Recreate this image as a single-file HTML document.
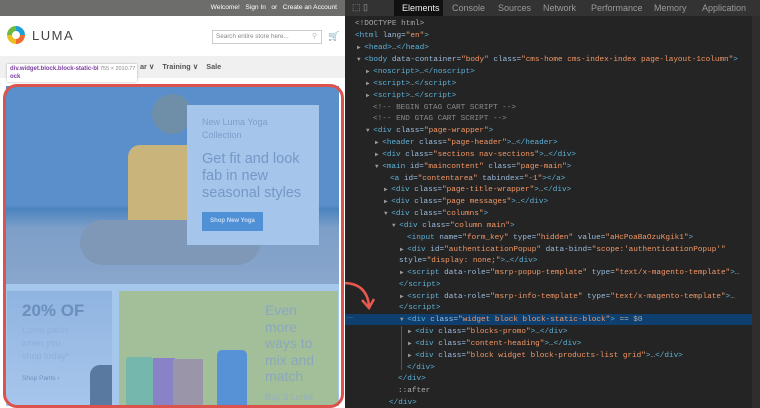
<!DOCTYPE html>
<html><head><style>
*{margin:0;padding:0;box-sizing:border-box}
body{width:760px;height:408px;overflow:hidden;position:relative;background:#fff;font-family:"Liberation Sans",sans-serif}
.a{position:absolute}
#dev{left:345px;top:0;width:415px;height:408px;background:#242424}
.ln{position:absolute;font-family:"Liberation Mono",monospace;font-size:7.7px;white-space:pre;color:#9bbbdc;line-height:10px}
.t{color:#5db0d7}.v{color:#f29766}.c{color:#8a8a8a}.g{color:#aaa}
.tri{color:#999;font-size:6px}
.tab{position:absolute;top:3px;font-size:9px;color:#9a9a9a}
</style></head><body>
<div class="a" style="left:0;top:0;width:345px;height:16px;background:#6d6d6b"></div>
<div class="a" style="right:423px;top:4px;font-size:6.6px;color:#fff;white-space:pre">Welcome!   Sign In   or   Create an Account</div>
<svg class="a" style="left:6px;top:25px" width="20" height="20" viewBox="0 0 20 20">
<path d="M10 1 A9 9 0 0 1 19 10 L14 10 A4 4 0 0 0 10 6Z" fill="#1e9fd8"/>
<path d="M19 10 A9 9 0 0 1 10 19 L10 14 A4 4 0 0 0 14 10Z" fill="#ef6c2d"/>
<path d="M10 19 A9 9 0 0 1 1 10 L6 10 A4 4 0 0 0 10 14Z" fill="#e8c020"/>
<path d="M1 10 A9 9 0 0 1 10 1 L10 6 A4 4 0 0 0 6 10Z" fill="#6dbb3c"/></svg>
<div class="a" style="left:32px;top:28px;font-size:13px;letter-spacing:1.5px;color:#444">LUMA</div>
<div class="a" style="left:212px;top:30px;width:110px;height:14px;border:1px solid #ccc"></div>
<div class="a" style="left:216px;top:33px;font-size:6.3px;color:#888">Search entire store here...</div>
<div class="a" style="left:312px;top:32px;font-size:7px;color:#bbb">⚲</div>
<div class="a" style="left:328px;top:31px;font-size:9px;color:#666">🛒</div>
<div class="a" style="left:0;top:56px;width:345px;height:22px;background:#f0f0f0"></div>
<div class="a" style="left:140px;top:62px;font-size:7.3px;color:#555;font-weight:bold;white-space:pre">ar ∨    Training ∨    Sale</div>
<div class="a" style="left:7px;top:64px;width:130px;height:18px;background:#fff;box-shadow:0 0 2px #aaa"></div>
<div class="a" style="left:10px;top:66px;font-size:6px;color:#7a3e9d;font-weight:bold">div.widget.block.block-static-bl</div>
<div class="a" style="left:100px;top:66px;font-size:5.5px;color:#888">755 × 2010.77</div>
<div class="a" style="left:10px;top:74px;font-size:6px;color:#7a3e9d;font-weight:bold">ock</div>
<div class="a" style="left:6px;top:86px;width:333px;height:198px;background:linear-gradient(#5a8fcc 0%,#5b8fcb 60%,#4b83bf 62%,#7d9fc8 72%,#8aa6cc 100%)"></div>
<div class="a" style="left:152px;top:94px;width:40px;height:40px;border-radius:50%;background:#6f8fa8"></div>
<div class="a" style="left:128px;top:145px;width:70px;height:85px;background:#c9b57c;border-radius:12px 12px 4px 4px"></div>
<div class="a" style="left:80px;top:220px;width:180px;height:45px;background:#7f98b8;border-radius:40px"></div>
<div class="a" style="left:187px;top:105px;width:132px;height:140px;background:#a5c5eb"></div>
<div class="a" style="left:202px;top:116px;font-size:9px;line-height:13px;color:#7d9fca">New Luma Yoga<br>Collection</div>
<div class="a" style="left:202px;top:151px;font-size:14.5px;line-height:17px;color:#7598c6">Get fit and look<br>fab in new<br>seasonal styles</div>
<div class="a" style="left:202px;top:212px;width:61px;height:19px;background:#4f90d6;color:#c7dcf2;font-size:6px;font-weight:bold;text-align:center;line-height:19px">Shop New Yoga</div>
<div class="a" style="left:6px;top:284px;width:333px;height:122px;background:#a6c7ec"></div>
<div class="a" style="left:7px;top:291px;width:105px;height:115px;background:linear-gradient(#8fb4e0,#a8c6ec)"></div>
<div class="a" style="left:22px;top:301px;font-size:17px;font-weight:bold;color:#6a8fbd">20% OF</div>
<div class="a" style="left:22px;top:324px;font-size:9px;line-height:13px;color:#8fb0da">Luma pants<br>when you<br>shop today*</div>
<div class="a" style="left:22px;top:375px;font-size:6.5px;color:#6f90bb">Shop Pants ›</div>
<div class="a" style="left:90px;top:365px;width:22px;height:41px;background:#5a79a0;border-radius:10px 0 0 0"></div>
<div class="a" style="left:119px;top:291px;width:219px;height:115px;background:#a3bf99"></div>
<div class="a" style="left:126px;top:357px;width:27px;height:50px;background:#75b7ad;border-radius:3px"></div>
<div class="a" style="left:153px;top:358px;width:22px;height:49px;background:#8a82c6"></div>
<div class="a" style="left:173px;top:359px;width:30px;height:48px;background:#9a95a9"></div>
<div class="a" style="left:217px;top:350px;width:30px;height:57px;background:#5791d6;border-radius:5px 5px 0 0"></div>
<div class="a" style="left:265px;top:302px;font-size:14px;line-height:16.5px;color:#8ba7bd">Even<br>more<br>ways to<br>mix and<br>match</div>
<div class="a" style="left:265px;top:392px;font-size:9px;color:#93aec4">Buy 3 Luma</div>
<div class="a" style="left:3px;top:84px;width:341px;height:324px;border:3px solid #dc524c;border-radius:14px"></div>
<div class="a" id="dev"></div>
<div class="a" style="left:345px;top:0;width:415px;height:16px;background:#333"></div>
<div class="a" style="left:394px;top:0;width:49px;height:16px;background:#111"></div>
<div class="a" style="left:352px;top:2px;font-size:9px;color:#999">⬚ ▯</div>
<div class="tab" style="left:402px;color:#eee">Elements</div>
<div class="tab" style="left:452px">Console</div>
<div class="tab" style="left:498px">Sources</div>
<div class="tab" style="left:543px">Network</div>
<div class="tab" style="left:591px">Performance</div>
<div class="tab" style="left:654px">Memory</div>
<div class="tab" style="left:702px">Application</div>
<div class="a" style="left:752px;top:16px;width:8px;height:392px;background:#2e2e2e"></div>
<div class="a" style="left:345px;top:314px;width:407px;height:11px;background:#0f3f6e"></div>
<div class="a" style="left:347px;top:315px;font-size:6px;color:#bbb">···</div>
<svg class="a" style="left:335px;top:278px" width="45" height="40"><path d="M10 5 Q32 6 34 28" stroke="#e8584e" stroke-width="2.5" fill="none"/><path d="M27 22 L34 30 L39 21" stroke="#e8584e" stroke-width="2.5" fill="none"/></svg>
<div id="code">
<div class="ln" style="left:355px;top:19px"><span class="g">&lt;!DOCTYPE html&gt;</span></div>
<div class="ln" style="left:355px;top:31px"><span class="t">&lt;html </span>lang=<span class="v">"en"</span><span class="t">&gt;</span></div>
<div class="ln" style="left:357px;top:43px"><span class="tri">▶ </span><span class="t">&lt;head&gt;</span><span class="g">…</span><span class="t">&lt;/head&gt;</span></div>
<div class="ln" style="left:357px;top:55px"><span class="tri">▼ </span><span class="t">&lt;body </span>data-container=<span class="v">"body"</span> class=<span class="v">"cms-home cms-index-index page-layout-1column"</span><span class="t">&gt;</span></div>
<div class="ln" style="left:366px;top:67px"><span class="tri">▶ </span><span class="t">&lt;noscript&gt;</span><span class="g">…</span><span class="t">&lt;/noscript&gt;</span></div>
<div class="ln" style="left:366px;top:79px"><span class="tri">▶ </span><span class="t">&lt;script&gt;</span><span class="g">…</span><span class="t">&lt;/script&gt;</span></div>
<div class="ln" style="left:366px;top:91px"><span class="tri">▶ </span><span class="t">&lt;script&gt;</span><span class="g">…</span><span class="t">&lt;/script&gt;</span></div>
<div class="ln" style="left:373px;top:103px"><span class="c">&lt;!-- BEGIN GTAG CART SCRIPT --&gt;</span></div>
<div class="ln" style="left:373px;top:114px"><span class="c">&lt;!-- END GTAG CART SCRIPT --&gt;</span></div>
<div class="ln" style="left:366px;top:126px"><span class="tri">▼ </span><span class="t">&lt;div </span>class=<span class="v">"page-wrapper"</span><span class="t">&gt;</span></div>
<div class="ln" style="left:375px;top:138px"><span class="tri">▶ </span><span class="t">&lt;header </span>class=<span class="v">"page-header"</span><span class="t">&gt;</span><span class="g">…</span><span class="t">&lt;/header&gt;</span></div>
<div class="ln" style="left:375px;top:150px"><span class="tri">▶ </span><span class="t">&lt;div </span>class=<span class="v">"sections nav-sections"</span><span class="t">&gt;</span><span class="g">…</span><span class="t">&lt;/div&gt;</span></div>
<div class="ln" style="left:375px;top:162px"><span class="tri">▼ </span><span class="t">&lt;main </span>id=<span class="v">"maincontent"</span> class=<span class="v">"page-main"</span><span class="t">&gt;</span></div>
<div class="ln" style="left:390px;top:174px"><span class="t">&lt;a </span>id=<span class="v">"contentarea"</span> tabindex=<span class="v">"-1"</span><span class="t">&gt;&lt;/a&gt;</span></div>
<div class="ln" style="left:384px;top:185px"><span class="tri">▶ </span><span class="t">&lt;div </span>class=<span class="v">"page-title-wrapper"</span><span class="t">&gt;</span><span class="g">…</span><span class="t">&lt;/div&gt;</span></div>
<div class="ln" style="left:384px;top:197px"><span class="tri">▶ </span><span class="t">&lt;div </span>class=<span class="v">"page messages"</span><span class="t">&gt;</span><span class="g">…</span><span class="t">&lt;/div&gt;</span></div>
<div class="ln" style="left:384px;top:209px"><span class="tri">▼ </span><span class="t">&lt;div </span>class=<span class="v">"columns"</span><span class="t">&gt;</span></div>
<div class="ln" style="left:392px;top:221px"><span class="tri">▼ </span><span class="t">&lt;div </span>class=<span class="v">"column main"</span><span class="t">&gt;</span></div>
<div class="ln" style="left:407px;top:233px"><span class="t">&lt;input </span>name=<span class="v">"form_key"</span> type=<span class="v">"hidden"</span> value=<span class="v">"aHcPoaBaOzuKgik1"</span><span class="t">&gt;</span></div>
<div class="ln" style="left:400px;top:245px"><span class="tri">▶ </span><span class="t">&lt;div </span>id=<span class="v">"authenticationPopup"</span> data-bind=<span class="v">"scope:'authenticationPopup'"</span></div>
<div class="ln" style="left:399px;top:256px">style=<span class="v">"display: none;"</span><span class="t">&gt;</span><span class="g">…</span><span class="t">&lt;/div&gt;</span></div>
<div class="ln" style="left:400px;top:268px"><span class="tri">▶ </span><span class="t">&lt;script </span>data-role=<span class="v">"msrp-popup-template"</span> type=<span class="v">"text/x-magento-template"</span><span class="t">&gt;</span><span class="g">…</span></div>
<div class="ln" style="left:399px;top:280px"><span class="t">&lt;/script&gt;</span></div>
<div class="ln" style="left:400px;top:292px"><span class="tri">▶ </span><span class="t">&lt;script </span>data-role=<span class="v">"msrp-info-template"</span> type=<span class="v">"text/x-magento-template"</span><span class="t">&gt;</span><span class="g">…</span></div>
<div class="ln" style="left:399px;top:303px"><span class="t">&lt;/script&gt;</span></div>
<div class="ln" style="left:400px;top:315px"><span class="tri">▼ </span><span class="t">&lt;div </span>class=<span class="v">"widget block block-static-block"</span><span class="t">&gt;</span><span class="g"> == $0</span></div>
<div class="ln" style="left:408px;top:327px"><span class="tri">▶ </span><span class="t">&lt;div </span>class=<span class="v">"blocks-promo"</span><span class="t">&gt;</span><span class="g">…</span><span class="t">&lt;/div&gt;</span></div>
<div class="ln" style="left:408px;top:339px"><span class="tri">▶ </span><span class="t">&lt;div </span>class=<span class="v">"content-heading"</span><span class="t">&gt;</span><span class="g">…</span><span class="t">&lt;/div&gt;</span></div>
<div class="ln" style="left:408px;top:351px"><span class="tri">▶ </span><span class="t">&lt;div </span>class=<span class="v">"block widget block-products-list grid"</span><span class="t">&gt;</span><span class="g">…</span><span class="t">&lt;/div&gt;</span></div>
<div class="ln" style="left:407px;top:363px"><span class="t">&lt;/div&gt;</span></div>
<div class="ln" style="left:398px;top:374px"><span class="t">&lt;/div&gt;</span></div>
<div class="ln" style="left:398px;top:386px"><span class="g">::after</span></div>
<div class="ln" style="left:389px;top:398px"><span class="t">&lt;/div&gt;</span></div>
</div>
<div class="a" style="left:401px;top:326px;width:1px;height:44px;background:#555"></div>
</body></html>
